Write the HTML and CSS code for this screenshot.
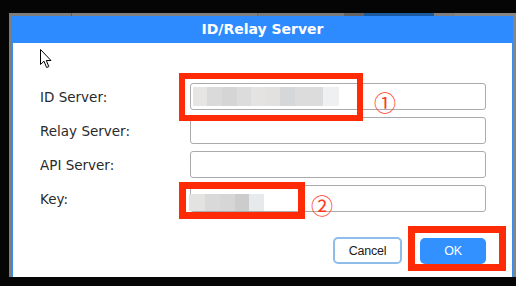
FILE: index.html
```html
<!DOCTYPE html>
<html lang="en">
<head>
  <meta charset="UTF-8" />
  <title>ID/Relay Server</title>
  <link rel="stylesheet" href="styles.css">
</head>
<body>
  <!-- Window frame -->
  <div class="frame">
    <div class="dialog">
      <div class="dialog-title">ID/Relay Server</div>
      <div class="dialog-body">
        <div class="form">
          <label class="label">ID Server:</label>
          <div class="field"><span class="blur blur-id"></span></div>

          <label class="label">Relay Server:</label>
          <div class="field"></div>

          <label class="label">API Server:</label>
          <div class="field"></div>

          <label class="label">Key:</label>
          <div class="field"><span class="blur blur-key"></span></div>
        </div>

        <div class="actions">
          <button class="btn btn-cancel">Cancel</button>
          <button class="btn btn-ok">OK</button>
        </div>
      </div>
    </div>
  </div>

  <!-- Mouse pointer -->
  <svg class="cursor" width="13" height="20" viewBox="0 0 13 20">
    <path d="M0.5 0.5 L0.5 15.5 L4 12.2 L6.6 18.5 L8.8 17.6 L6.3 11.5 L11 11.5 Z" fill="#fff" stroke="#000" stroke-width="1" stroke-linejoin="miter"/>
  </svg>

  <!-- Red annotations -->
  <div class="mark mark-1"></div>
  <div class="mark mark-2"></div>
  <div class="mark mark-3"></div>
  <span class="num num-1">①</span>
  <span class="num num-2">②</span>
</body>
</html>
```

FILE: styles.css
```css
* {
  margin: 0;
  padding: 0;
  box-sizing: border-box;
}

body {
  position: relative;
  width: 516px;
  height: 286px;
  overflow: hidden;
  background: #050505;
  padding: 13px 0 0 9px;
  font-family: 'DejaVu Sans', sans-serif;
}

/* Window frame */
.frame {
  width: 507px;
  height: 264px;
  padding: 3px 3px 0 3px;
  background: linear-gradient(to right,
    #7d7d7d 0 62px,
    #5e5e5e 62px 63px,
    #7f7f7f 63px 248px,
    #6a6a6a 248px 249px,
    #7b7b7b 249px 335px,
    #646464 335px 355px,
    #1c5aa0 355px 425px,
    #7e7e7e 425px 446px,
    #858585 446px 507px);
}

.dialog {
  height: 261px;
  display: flex;
  flex-direction: column;
}

.dialog-title {
  height: 27px;
  line-height: 27px;
  background: #2e8bff;
  color: #fff;
  text-align: center;
  font-weight: bold;
  font-size: 14px;
}

.dialog-body {
  flex: 1;
  background: #fff;
  border-left: 1px solid #3a8ee6;
  border-right: 1px solid #3a8ee6;
  padding: 40px 26px 0 27px;
}

/* Form */
.form {
  display: grid;
  grid-template-columns: 150px 296px;
  grid-auto-rows: 27px;
  row-gap: 7px;
}

.label {
  display: flex;
  align-items: center;
  font-size: 13.5px;
  color: #2a2a2a;
}

.field {
  display: flex;
  align-items: center;
  border: 1px solid #ababab;
  border-radius: 3px;
  background: #fff;
}

.blur {
  display: block;
}

.blur-id {
  width: 146px;
  height: 19px;
  margin-left: 2px;
  background: linear-gradient(to right,
    #e6e5e3 0 14px,
    #d9dad9 14px 29px,
    #d5d5d5 29px 44px,
    #dcdcdc 44px 58px,
    #e3e3e3 58px 73px,
    #e2e1df 73px 87px,
    #d6d7d9 87px 102px,
    #dcdcdc 102px 130px,
    #eff0f2 130px 146px);
}

.blur-key {
  width: 75px;
  height: 17px;
  margin-left: -2px;
  align-self: flex-end;
  margin-bottom: 0;
  background: linear-gradient(to right,
    #e3e3e1 0 16px,
    #d9d9d9 16px 31px,
    #d6d6d6 31px 46px,
    #cdcccc 46px 60px,
    #e6eaec 60px 75px);
}

/* Buttons */
.actions {
  display: flex;
  justify-content: flex-end;
  align-items: center;
  gap: 18px;
  margin-top: 25px;
  height: 27px;
}

.btn {
  font-family: 'Liberation Sans', sans-serif;
  font-size: 12.5px;
  letter-spacing: -0.2px;
  border-radius: 5px;
  cursor: pointer;
}

.btn-cancel {
  width: 69px;
  height: 27px;
  background: #fff;
  color: #1a1a1a;
  border: 2px solid #8ebde9;
}

.btn-ok {
  width: 66px;
  height: 26px;
  background: #3390ff;
  color: #fff;
  border: none;
}

/* Pointer */
.cursor {
  position: absolute;
  left: 40px;
  top: 49px;
}

/* Annotations */
.mark {
  position: absolute;
  border: 7px solid #ff2a06;
}

.mark-1 {
  left: 179px;
  top: 73px;
  width: 184px;
  height: 48px;
  border-width: 6px;
}

.mark-2 {
  left: 179px;
  top: 182px;
  width: 126px;
  height: 37px;
}

.mark-3 {
  left: 408px;
  top: 226px;
  width: 98px;
  height: 45px;
}

.num {
  position: absolute;
  font-family: 'Noto Sans CJK JP', sans-serif;
  font-size: 22px;
  line-height: 22px;
  color: #ff3a1c;
}

.num-1 {
  left: 374px;
  top: 90px;
}

.num-2 {
  left: 311px;
  top: 193px;
}
```
